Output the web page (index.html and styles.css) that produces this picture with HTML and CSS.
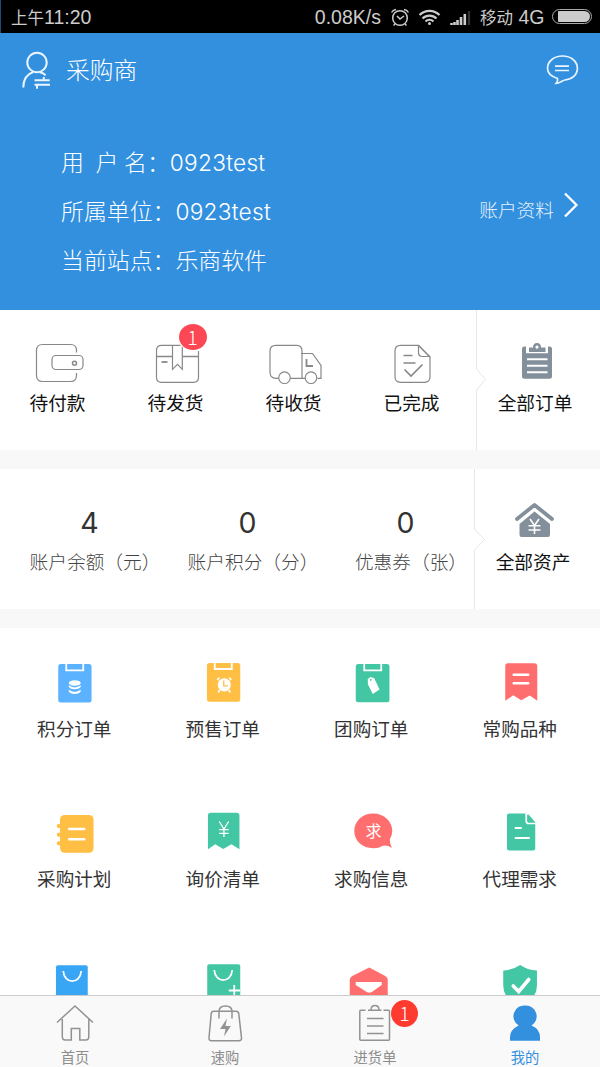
FILE: index.html
```html
<!DOCTYPE html>
<html lang="zh-CN">
<head>
<meta charset="utf-8">
<title>采购商</title>
<link rel="stylesheet" href="styles.css">
</head>
<body>
<div class="screen">
  <div class="status">
    <span class="time"><span class="han">上午</span>11:20</span>
    <span class="speed">0.08K/s</span>
    <svg class="status-icons" width="84" height="32" viewBox="388 0 84 32" fill="none" stroke="#ccc" stroke-width="1.5">
      <circle cx="400" cy="17" r="7.3"/><path d="M397 15l3 3 4-3M391.6 11.5a6 6 0 0 1 4.4-3M408.400 11.500a6 6 0 0 0-4.400-3M395 23l-1.500 1.500M405 23l1.500 1.500"/>
      <path d="M419.500 14a14 14 0 0 1 20 0M422.500 17.500a10 10 0 0 1 14 0M425.500 20.500a6 6 0 0 1 8 0" stroke-width="2.200"/><circle cx="429.500" cy="22.500" r="1.500" fill="#ccc" stroke="none"/>
      <path d="M451.500 24v-2M454.500 24v-3M457.500 24v-5M461 24v-8M464.800 24V13" stroke-width="2.600"/><path d="M469 24V10" stroke="#333" stroke-width="2.200"/>
    </svg>
    <span class="carrier"><span class="han">移动</span> 4G</span>
    <span class="battery"><span class="charge"></span></span>
  </div>

  <header class="hero">
    <div class="topbar">
      <svg width="34" height="42" viewBox="20 48 34 42" fill="none" stroke="#eaf5ff" stroke-width="2">
        <circle cx="37" cy="61.500" r="9.700"/><path d="M23.300 86.500c0-8 4-13.500 10-15.500M40 71.200c2.300.6 4.200 1.600 5.600 3"/>
        <path d="M34.500 79.300h15.200M43.800 76v3M34.500 83.800h15.500M37 84v3.800" stroke-width="2"/>
      </svg>
      <h1 class="title">采购商</h1>
      <svg class="chat" width="36" height="36" viewBox="544 52 36 36" fill="none" stroke="#eaf5ff" stroke-width="1.700">
        <path d="M557.500 78.500c-6-2-10-5.500-10-10.300 0-7 6.700-12.200 15-12.200s14.900 5.200 14.900 12.200c0 6.800-5.400 11.300-12.400 11.800-2.500.3-4.500 3.300-8.800 3.400 1.400-1.600 1.700-3.300 1.300-4.900z"/>
        <path d="M555 66.200h14M555 70.500h14"/>
      </svg>
    </div>
    <div class="profile">
      <div class="facts">
        <p class="user">用  户 名：<span class="latin">0923test</span></p>
        <p>所属单位：<span class="latin">0923test</span></p>
        <p>当前站点：乐商软件</p>
      </div>
      <a class="account">账户资料
        <svg width="18" height="28" viewBox="0 0 18 28" fill="none" stroke="#fff" stroke-width="2.300"><path d="M3 2.500l11.500 11.500L3 25.500"/></svg>
      </a>
    </div>
  </header>

  <section class="orders">
    <div class="steps">
      <div class="cell">
        <svg class="line" width="60" height="50" viewBox="27.500 338 60 50"><path d="M76 352.500v-2q0-6-6-6H42q-6 0-6 6v25q0 6 6 6h28q6 0 6-6V373"/><rect x="51.500" y="355.500" width="31" height="14" rx="4"/><circle cx="74" cy="363.300" r="2" stroke-width="1.500"/></svg>
        <span>待付款</span>
      </div>
      <div class="cell">
        <svg class="line" width="60" height="50" viewBox="145.500 338 60 50"><path d="M180 345.300H161q-5 0-5 5v27q0 5 5 5h32q5 0 5-5V351"/><path d="M156 356.500h16M182 356.500h16" stroke-width="1.600"/><path d="M172 345.300v24l5-5 4.800 5v-24"/><path d="M161 362h6" stroke-width="1.800"/></svg>
        <span>待发货</span>
        <b class="badge">1</b>
      </div>
      <div class="cell">
        <svg class="line" width="60" height="50" viewBox="263.500 338 60 50"><path d="M278 378.300h-2.500q-6 0-6-6V351q0-5.700 6-5.700H296q5.500 0 5.500 5.500v27.500H290M300.500 353.500H312l8.500 12v12.800H317M301 378.300h4"/><circle cx="284" cy="377.700" r="5.800"/><circle cx="310.500" cy="377.700" r="5.800"/><path d="M306 359v7h6.500" stroke-width="1.800"/></svg>
        <span>待收货</span>
      </div>
      <div class="cell">
        <svg class="line" width="60" height="50" viewBox="381.500 338 60 50"><path d="M418 345.300h-18q-5.500 0-5.500 5.500v26q0 5.500 5.500 5.500h24q5.500 0 5.500-5.500V357z"/><path d="M418 345.300v7.200q0 4 4 4h7.500M418 345.300l11.500 11.700"/><path d="M403 355.500h9M403 363h12M404 369.500l6.500 6.500 11.500-11.500" stroke-width="1.700"/></svg>
        <span>已完成</span>
      </div>
    </div>
    <div class="all all-orders">
      <svg class="notch" width="13" height="140" viewBox="0 0 13 140"><path d="M.5 0v59l9 10.500-9 10.500v60"/></svg>
      <svg width="60" height="50" viewBox="505 338 60 50"><path fill="#838f9a" d="M526 346.500h-1.500q-2.500 0-2.500 2.500v27.300q0 2.500 2.500 2.500h25q2.500 0 2.500-2.500V349q0-2.500-2.500-2.500H548v6.700h-22z"/><path fill="#838f9a" fill-rule="evenodd" d="M529 352v-4.500h4q0-4.500 4-4.500t4 4.500h4.500v4.500zM537 345.600a1.600 1.600 0 1 0 .01 0z"/><path d="M527 359.300h20.500M527 365.800h20.500M527 372.200h20.500" stroke="#fff" stroke-width="2"/></svg>
      <span>全部订单</span>
    </div>
  </section>

  <section class="assets">
    <div class="balances">
      <div class="cell"><strong>4</strong><span>账户余额（元）</span></div>
      <div class="cell"><strong>0</strong><span>账户积分（分）</span></div>
      <div class="cell"><strong>0</strong><span>优惠券（张）</span></div>
    </div>
    <div class="all all-assets">
      <svg class="notch" width="13" height="140" viewBox="0 0 13 140"><path d="M.5 0v60l10 10.500-10 10.500v59"/></svg>
      <svg width="60" height="50" viewBox="503 497 60 50"><path d="M517 519l17.500-14 17.500 14" fill="none" stroke="#838f9a" stroke-width="3.800" stroke-linecap="round" stroke-linejoin="round"/><path fill="#838f9a" d="M534.500 511.500l15.500 12.500v10.500q0 2.500-2 2.500h-26.500q-2 0-2-2.500V524z"/><path d="M530 519l4.500 6.500 4.500-6.500M534.500 525v9M528.500 525.700h12M528.500 530h12" fill="none" stroke="#fff" stroke-width="1.600"/></svg>
      <span>全部资产</span>
    </div>
  </section>

  <section class="tools">
    <div class="cell">
      <svg width="60" height="50" viewBox="44.250 655 60 50"><rect x="58.500" y="664" width="33.300" height="38.500" rx="2.500" fill="#5bb2fe"/><path d="M66.500 662v8.300h17V662" class="clip"/><g fill="#fff"><ellipse cx="75" cy="683" rx="6" ry="2.800"/><path d="M69 685.300q6 4.200 12 0v1.500q-1.500 2.500-6 2.500t-6-2.500zM69 689.800q6 4.200 12 0v1.500q-1.500 2.700-6 2.700t-6-2.700z"/></g></svg>
      <span>积分订单</span>
    </div>
    <div class="cell">
      <svg width="60" height="50" viewBox="192.750 655 60 50"><rect x="206.700" y="663" width="33.300" height="38.700" rx="2.500" fill="#ffbf45"/><path d="M214.500 661v8h17v-8" class="clip"/><circle cx="224" cy="684.800" r="6.600" fill="#fff"/><path d="M217 680l2-2.500M231 680l-2-2.500M219.500 690l-1.500 2.500M228.500 690l1.500 2.500" stroke="#fff" stroke-width="1.800"/><path d="M223.500 680.500v5.300h4" fill="none" stroke="#ffbf45" stroke-width="1.300"/></svg>
      <span>预售订单</span>
    </div>
    <div class="cell">
      <svg width="60" height="50" viewBox="341.250 655 60 50"><rect x="356" y="664" width="33.700" height="38.300" rx="2.500" fill="#43c6a4"/><path d="M364.500 662v8.300h17V662" class="clip"/><path fill="#fff" fill-rule="evenodd" d="M368 679.200l2.500-2.200 4 1.300 5.300 11.300-6.800 4.400-4.800-9.500zM371 679a.9.900 0 1 0 .01 0z"/></svg>
      <span>团购订单</span>
    </div>
    <div class="cell">
      <svg width="60" height="50" viewBox="489.750 655 60 50"><path fill="#ff6e6e" d="M507.500 663.300h26.500q3 0 3 3v34.500l-7.500-5.300-8.500 4.800-8-5-8 5.500v-34.500q0-3 2.500-3z"/><path d="M513.500 674.800h14.500M513.500 683.300h14.500" class="mark"/></svg>
      <span>常购品种</span>
    </div>
    <div class="cell">
      <svg width="60" height="50" viewBox="44.250 805 60 50"><rect x="60.300" y="815" width="33.500" height="37.700" rx="4.500" fill="#ffbf45"/><path d="M59 826h4M59 834.700h4M59 843.300h4" stroke="#ffbf45" stroke-width="4" stroke-linecap="round"/><path d="M69.500 829h15M69.500 839.300h15" class="mark"/></svg>
      <span>采购计划</span>
    </div>
    <div class="cell">
      <svg width="60" height="50" viewBox="192.750 805 60 50"><path fill="#43c6a4" d="M210.500 812.700h26q2.700 0 2.700 2.500v34l-8-5-8.200 4.800-8-4.800-7.300 5v-34q0-2.500 2.800-2.500z"/><path d="M219 821.500l4.700 7.500 4.700-7.500M223.700 829v8M219 829.700h9.400M219 833.300h9.400" fill="none" stroke="#fff" stroke-width="1.300"/></svg>
      <span>询价清单</span>
    </div>
    <div class="cell">
      <svg width="60" height="50" viewBox="341.250 805 60 50"><path fill="#ff6e6e" d="M373.500 813.500c11 0 19 8 19 17.500q0 4.500-2.500 8.500 0 4 2.200 8.500-4-3.500-9-2.300-4 2.500-9.700 2.500c-11 0-19-7.500-19-17.200s8-17.500 19-17.500z"/><text x="373.800" y="836.500" class="glyph">求</text></svg>
      <span>求购信息</span>
    </div>
    <div class="cell">
      <svg width="60" height="50" viewBox="489.750 805 60 50"><path fill="#43c6a4" d="M509 813.500h17l9 9v26q0 2-2 2h-24q-2.300 0-2.300-2V815.500q0-2 2.300-2z"/><path fill="#43c6a4" d="M528 814l7 8.500h-7z"/><path d="M526 812v9q0 2.500 2.500 2.500h8" fill="none" stroke="#fff" stroke-width="1.700"/><path d="M514.500 828h7M514.500 838h15" class="mark thin"/></svg>
      <span>代理需求</span>
    </div>
    <div class="cell">
      <svg width="60" height="50" viewBox="44.250 955 60 50"><rect x="56.200" y="965.300" width="31.800" height="45" rx="2" fill="#38a5f5"/><path d="M63.500 971c1 13.500 17 13.500 18 0" class="clip"/></svg>
    </div>
    <div class="cell">
      <svg width="60" height="50" viewBox="192.750 955 60 50"><rect x="207" y="964.300" width="33" height="45" rx="2" fill="#43c6a4"/><path d="M214 970c1 13.500 17 13.500 18 0M228.500 990.500H240M234 985v12" class="clip"/></svg>
    </div>
    <div class="cell">
      <svg width="60" height="50" viewBox="341.250 955 60 50"><path fill="#ff6e6e" d="M369.500 967.500l16 8.500q2.500 1.500 2.500 4v25h-38v-25q0-2.500 2.500-4z"/><path fill="#fff" d="M356 982h26v3l-10 7q-2.500 1.500-5 0l-11-7z"/></svg>
    </div>
    <div class="cell">
      <svg width="60" height="50" viewBox="489.750 955 60 50"><path fill="#43c6a4" d="M520 965q7 5 16.700 5.500v15q0 14-16.700 19-17-5-17-19v-15q9.500-.5 17-5.500z"/><path d="M513 986l5.500 5.500 10-12" fill="none" stroke="#fff" stroke-width="3.600" stroke-linecap="round"/></svg>
    </div>
  </section>

  <nav class="tabs">
    <div class="tab">
      <svg class="line" width="60" height="46" viewBox="45 1001 60 46"><path d="M57 1022.500l18-16.500 18 16.500M62.300 1019v17.500q0 3.500 3 3.500h6v-11.500h8.500V1040h6q3 0 3-3.500V1019"/></svg>
      <span>首页</span>
    </div>
    <div class="tab">
      <svg class="line" width="60" height="46" viewBox="195 1001 60 46"><path d="M213.500 1011.300h22.500q2.500 0 2.800 2.500l2.700 24q.2 3-2.500 3h-27.500q-2.700 0-2.500-3l2.200-24q.3-2.500 2.300-2.500z"/><path d="M219 1018.500v-7q0-5.500 6.500-5.500t6.500 5.500v7"/><path fill="#929292" stroke="none" d="M227 1018.500l-7 10.500h5.500l-1.500 7.500 6.800-10.500h-5.300z"/></svg>
      <span>速购</span>
    </div>
    <div class="tab">
      <svg class="line" width="60" height="46" viewBox="345 1001 60 46"><path d="M365.500 1010.300h-4.700q-1 0-1 1v28q0 1 1 1h27.700q1 0 1-1v-28q0-1-1-1h-5M368 1010.300h13.500M371 1010q0-4.500 4-4.500t4 4.500M367 1018.500h16.500M367 1026h16.500M367 1033.500h16.500"/></svg>
      <span>进货单</span>
      <b class="badge red">1</b>
    </div>
    <div class="tab active">
      <svg width="60" height="46" viewBox="495 1001 60 46"><path fill="#3390df" d="M525.500 1005.500a10.800 10.800 0 0 1 6 20q8.500 3.500 8.500 12v3.300h-30v-3.300q0-8 8.700-12a10.800 10.800 0 0 1 6.800-20z"/></svg>
      <span>我的</span>
    </div>
  </nav>
</div>
</body>
</html>
```

FILE: styles.css
```css
* { box-sizing: border-box; }
body {
  margin: 0;
  font-family: "Noto Sans CJK SC", sans-serif;
  background: #fff;
}
svg { display: block; flex: none; }
.screen {
  width: 600px;
  height: 1067px;
  display: flex;
  flex-direction: column;
  overflow: hidden;
  background: #f8f8f8;
}

.status {
  flex: none;
  height: 33px;
  padding: 0 8px 0 10px;
  display: flex;
  align-items: center;
  background: #000;
  border-left: 1px solid #1b4c77;
  color: #ccc;
  font: 19.500px/32px "Liberation Sans", "Noto Sans CJK SC", sans-serif;
  white-space: nowrap;
}
.han { font-size: 16.500px; line-height: 1; }
.speed { margin-left: auto; }
.status-icons { margin: 0 8px 0 7px; }
.carrier { width: 64px; }
.battery {
  width: 40px;
  height: 15px;
  margin-left: 8px;
  padding: 1px 1px 1px 5px;
  border: 1px solid #aaa;
  border-radius: 8px;
  display: flex;
}
.charge { flex: 1; background: #ccc; border-radius: 1px 6px 6px 1px; }

.hero { flex: none; height: 277px; background: #3390df; color: #fff; }
.topbar { height: 73px; padding: 0 20px; display: flex; align-items: center; }
.title { margin: -2px 0 0 12px; font-size: 23.800px; font-weight: 300; line-height: 36px; }
.chat { margin-left: auto; }
.profile { display: flex; justify-content: space-between; padding: 31px 20px 0 61px; }
.facts p { margin: 0; height: 49px; font-size: 22.900px; line-height: 49px; font-weight: 300; white-space: pre; }
.facts .user { word-spacing: .7px; }
.latin { font-family: Inter, sans-serif; font-size: 22.700px; letter-spacing: .25px; font-weight: 300; }
.account { display: flex; align-items: center; gap: 8px; height: 143px; font-size: 18.700px; font-weight: 300; color: #e6f2fd; }
.account svg { margin-top: -7px; }

.orders, .assets { flex: none; height: 140px; display: flex; background: #fff; }
.assets { margin: 19px 0; }
.cell { position: relative; display: flex; flex-direction: column; align-items: center; white-space: nowrap; }
.line { fill: none; stroke: #888; stroke-width: 1.200; }
.steps { width: 472px; margin-left: -1.500px; margin-right: 5.500px; display: grid; grid-template-columns: repeat(4, 118px); padding-top: 28px; }
.steps span, .all span { font-size: 18.700px; line-height: 28px; color: #111; }
.badge {
  position: absolute;
  left: 62px;
  top: -14px;
  width: 28px;
  height: 26px;
  border-radius: 50%;
  background: #fc4755;
  color: #fff;
  font-size: 19px;
  font-weight: 300;
  line-height: 25px;
  text-align: center;
}
.steps .badge { box-shadow: 0 0 0 1px #fff; }
.all { position: relative; display: flex; flex-direction: column; align-items: center; padding-top: 28px; }
.all-orders { width: 118px; }
.all-assets { width: 118px; }
.notch { position: absolute; left: 0; top: 0; fill: none; stroke: #e6e6e6; }

.balances { width: 474px; padding: 33px 0 0 16px; display: grid; grid-template-columns: repeat(3, 158px); }
.balances strong { padding-right: 11px; font-family: Inter, sans-serif; font-size: 28.500px; font-weight: 400; line-height: 41px; color: #333; }
.balances span { margin-top: 4px; font-size: 18.700px; line-height: 28px; font-weight: 300; color: #444; }

.tools {
  flex: 1;
  min-height: 0;
  overflow: hidden;
  background: #fff;
  padding: 27px 6px 0 0;
  display: grid;
  grid-template-columns: repeat(4, 1fr);
  grid-auto-rows: 150px;
}
.tools span { margin-top: 9px; font-size: 18.600px; line-height: 28px; color: #333; }
.clip { fill: none; stroke: #fff; stroke-width: 1.800; }
.mark { stroke: #fff; stroke-width: 2.600; stroke-linecap: round; }
.thin { stroke-width: 2; stroke-linecap: butt; }
.glyph { fill: #fff; font-size: 16px; text-anchor: middle; }

.tabs {
  flex: none;
  height: 72px;
  padding-top: 5px;
  display: grid;
  grid-template-columns: repeat(4, 150px);
  background: #f9f9f9;
  border-top: 1px solid #ccc;
}
.tab { position: relative; display: flex; flex-direction: column; align-items: center; color: #8c8c8c; }
.tab .line { stroke: #929292; stroke-width: 1.500; }
.tab span { font-size: 14.300px; line-height: 20px; }
.tab.active { color: #3390df; }
.badge.red { left: 91px; top: -1px; height: 27px; width: 27px; background: #ff3b30; line-height: 26px; }
```
